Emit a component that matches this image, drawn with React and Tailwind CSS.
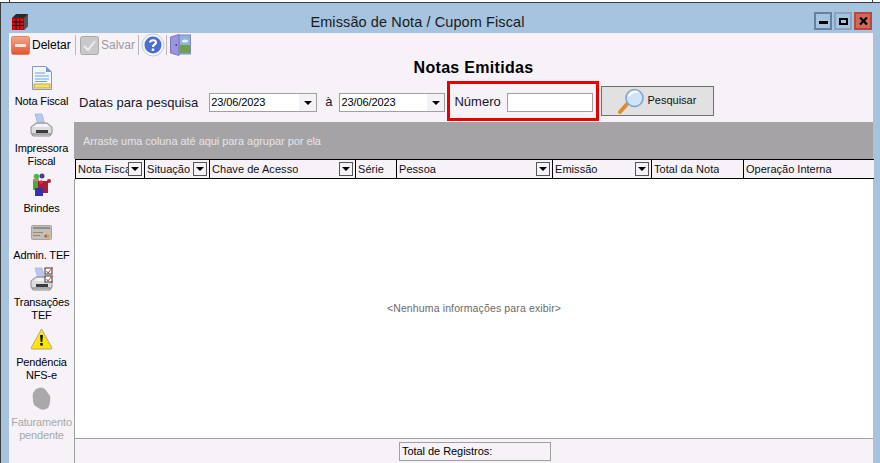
const FONT = "font-['Liberation_Sans',Arial,sans-serif]";

function AppIcon() {
  return (
    <svg width="18" height="18" viewBox="0 0 18 18" className="block">
      <path d="M1 5 L5 1 H17 V13 L13 17 H1 Z" fill="#2a2a2a" />
      <path d="M13 5 L17 1 V13 L13 17 Z" fill="#555" />
      <rect x="1.5" y="5.5" width="11" height="11" fill="#e0101a" stroke="#c00" />
      <path d="M1.5 9 H12.5 M1.5 12.5 H12.5 M5 5.5 V16.5 M8.7 5.5 V16.5" stroke="#111" strokeWidth="1" />
    </svg>
  );
}

function DeleteIcon() {
  return (
    <svg width="19" height="19" viewBox="0 0 19 19" className="block">
      <defs>
        <linearGradient id="dl" x1="0" y1="0" x2="0" y2="1">
          <stop offset="0" stopColor="#f6a58c" />
          <stop offset="1" stopColor="#e2552e" />
        </linearGradient>
      </defs>
      <rect x="0.5" y="0.5" width="18" height="18" rx="2" fill="url(#dl)" stroke="#d9805f" />
      <rect x="4" y="8" width="11" height="3" fill="#fde8e0" />
    </svg>
  );
}

function SaveIcon() {
  return (
    <svg width="19" height="19" viewBox="0 0 19 19" className="block">
      <rect x="0.5" y="0.5" width="18" height="18" rx="2" fill="#c9c9c9" stroke="#a9a9a9" />
      <path d="M4 10 L8 14 L15 5" fill="none" stroke="#eee" strokeWidth="2" />
    </svg>
  );
}

function HelpIcon() {
  return (
    <svg width="24" height="24" viewBox="0 0 24 24" className="block">
      <circle cx="12" cy="12" r="11" fill="#f4f4fa" stroke="#c4cbe0" />
      <circle cx="12" cy="12" r="8.5" fill="#4a6fd0" />
      <path d="M9 9.5 C9 6.5 15 6.5 15 9.5 C15 11.5 12 11.5 12 14" fill="none" stroke="#fff" strokeWidth="2.2" />
      <rect x="10.8" y="15.5" width="2.4" height="2.4" fill="#fff" />
    </svg>
  );
}

function DoorIcon() {
  return (
    <svg width="21" height="22" viewBox="0 0 21 22" className="block">
      <rect x="9" y="1" width="11.5" height="19" fill="#8fb6d8" stroke="#7c8cc0" />
      <rect x="10" y="11" width="10" height="8" fill="#6f9f4f" />
      <ellipse cx="15" cy="7" rx="3" ry="1.5" fill="#e8f0f8" />
      <path d="M0.5 3 L9 0.5 V21.5 L0.5 19 Z" fill="#9c94dc" stroke="#7c74c0" />
      <rect x="5.5" y="10" width="1.5" height="2" fill="#4a4090" />
    </svg>
  );
}

function DocIcon() {
  return (
    <svg width="20" height="24" viewBox="0 0 20 24" className="block">
      <path d="M0.5 0.5 H14 L19.5 6 V23.5 H0.5 Z" fill="#f2f7fd" stroke="#8d97b8" />
      <path d="M14 0.5 V6 H19.5 Z" fill="#6d9bd8" />
      <path d="M3 7 H13 M3 10 H17 M3 13 H17 M3 15.5 H15" stroke="#68a5e2" strokeWidth="1" />
      <rect x="2" y="18" width="16" height="4" fill="#f4e26a" stroke="#c8a838" />
    </svg>
  );
}

function PrinterIcon({ checks }) {
  return (
    <svg width="24" height="24" viewBox="0 0 24 24" className="block">
      <path d="M5 1 H12 L15 12 H8 Z" fill="#b9c8ef" stroke="#9aa8d0" strokeWidth="0.6" />
      <path d="M1 14 L6 10 H17 L22 14 V20 L20 23 H3 L1 20 Z" fill="#dcdcdc" stroke="#8c8c8c" />
      <path d="M4 14 H19 L17 11 H7 Z" fill="#f3f3f3" />
      <rect x="6" y="17" width="12" height="3" fill="#3c3c3c" />
      <path d="M2 21 H21" stroke="#777" />
      {checks && (
        <>
          <rect x="15" y="1" width="7" height="6" fill="#fff" stroke="#333" />
          <path d="M16.5 4 L18 6 L22.5 0.5" fill="none" stroke="#d83a20" />
          <rect x="15" y="9" width="7" height="6" fill="#fff" stroke="#333" />
          <path d="M16.5 12 L18 14 L22.5 8.5" fill="none" stroke="#d83a20" />
        </>
      )}
    </svg>
  );
}

function GiftIcon() {
  return (
    <svg width="20" height="24" viewBox="0 0 20 24" className="block">
      <rect x="1" y="6" width="6" height="6" fill="#d87a7a" />
      <circle cx="4.5" cy="3.5" r="2.8" fill="#48b848" />
      <circle cx="10" cy="3" r="2.5" fill="#4040a0" />
      <rect x="4" y="8" width="12" height="12" fill="#a81c3c" />
      <rect x="1" y="8" width="5" height="9" fill="#40b040" />
      <rect x="3" y="15" width="8" height="8" fill="#3a30a8" />
      <circle cx="17" cy="8" r="2" fill="#b82030" />
      <circle cx="9" cy="9" r="1.8" fill="#e83040" />
    </svg>
  );
}

function CardIcon() {
  return (
    <svg width="21" height="15" viewBox="0 0 21 15" className="block">
      <rect x="0.5" y="0.5" width="20" height="14" rx="1" fill="#c4beb4" stroke="#a8a49c" />
      <rect x="2" y="2" width="17" height="2" fill="#8a8c98" />
      <rect x="2" y="7" width="10" height="1" fill="#8e8a84" />
      <rect x="2" y="10" width="7" height="1" fill="#8e8a84" />
      <circle cx="15" cy="11" r="1.6" fill="#c05030" />
      <circle cx="17" cy="11" r="1.6" fill="#d8a030" />
    </svg>
  );
}

function WarnIcon() {
  return (
    <svg width="23" height="22" viewBox="0 0 23 22" className="block">
      <path d="M11.5 1 L22 20 Q22 21 21 21 H2 Q1 21 1 20 Z" fill="#ffe600" stroke="#b8a878" />
      <path d="M10 7 H13 L12.3 14 H10.7 Z" fill="#111" />
      <rect x="10.2" y="15" width="2.6" height="2.6" fill="#111" />
    </svg>
  );
}

function BagIcon() {
  return (
    <svg width="19" height="24" viewBox="0 0 19 24" className="block">
      <path d="M4 2 Q9 -1 13 2 L18 9 Q19 16 16 21 Q12 24 8 22 L2 18 Q0 11 1 6 Z" fill="#aaa8aa" />
    </svg>
  );
}

function MagnifierIcon() {
  return (
    <svg width="27" height="27" viewBox="0 0 27 27" className="block">
      <path d="M2 24 L10 15" stroke="#e08a30" strokeWidth="4" strokeLinecap="round" />
      <circle cx="16.5" cy="10" r="8.5" fill="#cfe4f6" stroke="#7ea8d0" strokeWidth="1.6" />
      <path d="M11 8 Q14 3 20 4" fill="none" stroke="#fff" strokeWidth="2" />
    </svg>
  );
}

function CloseGlyph() {
  return (
    <svg width="9" height="8" viewBox="0 0 9 8" className="block">
      <path d="M1 0.5 L8 7.5 M8 0.5 L1 7.5" stroke="#000" strokeWidth="2.2" fill="none" />
    </svg>
  );
}

function Arrow() {
  return <span className="block w-0 h-0 border-x-[4px] border-x-transparent border-t-[4px] border-t-black" />;
}

function DateBox({ w }) {
  return (
    <div className={`flex items-center justify-between h-[19px] border border-[#a0a0a0] bg-white pl-[1px] ${w}`}>
      <span className="text-[11px] leading-none tracking-[-0.1px] text-black">23/06/2023</span>
      <span className="flex items-center justify-center w-[17px] h-[17px] bg-[#f4f2f6]"><Arrow /></span>
    </div>
  );
}

function Col({ w, label, filter }) {
  return (
    <div className={`flex items-center justify-between h-full border-r border-black pl-[2px] pr-[2px] overflow-hidden ${w}`}>
      <span className="pt-[1px] text-[11px] leading-none whitespace-nowrap tracking-[0.05px] text-[#111] overflow-hidden">{label}</span>
      {filter && (
        <span className="flex items-center justify-center shrink-0 w-[14px] h-[14px] border border-[#555] bg-[#f4f2f6]"><Arrow /></span>
      )}
    </div>
  );
}

function SideItem({ icon, lines, disabled }) {
  return (
    <div className={`flex flex-col items-center w-full ${disabled ? "text-[#a8a8a8]" : "text-black"}`}>
      <div className="flex items-center justify-center h-[24px]">{icon}</div>
      <div className="mt-[5px] text-center text-[11px] leading-[13px] tracking-[-0.15px] whitespace-nowrap">
        {lines.map((l) => (
          <div key={l}>{l}</div>
        ))}
      </div>
    </div>
  );
}

function WinBtn({ cls, children }) {
  return <span className={`flex items-center justify-center w-[18px] h-[18px] border-2 ${cls}`}>{children}</span>;
}

export default function App() {
  return (
    <div className={`w-[880px] h-[463px] overflow-hidden bg-white flex flex-col ${FONT}`}>
      <div className="h-[3px] shrink-0 bg-white border-b border-[#3c3c3c] flex justify-between pl-[9px] pr-[7px]">
        <span className="w-px h-[2px] bg-[#3c3c3c]" />
        <span className="w-px h-[2px] bg-[#3c3c3c]" />
      </div>
      <div className="flex-1 min-h-0 flex border-l border-[#3c3c3c]">
        <div className="flex-1 min-w-0 flex flex-col bg-[#a6c4df]">
          {/* title bar */}
          <div className="h-[30px] shrink-0 relative flex items-center justify-center pr-[46px]">
            <span className="absolute left-[10px] top-[10px]"><AppIcon /></span>
            <span className="text-[14.5px] tracking-[0.1px] text-[#1a1a1a] mt-[9px]">Emissão de Nota / Cupom Fiscal</span>
            <div className="absolute right-[8px] top-[9px] flex gap-[2px]">
              <WinBtn cls="border-[#66809f]"><span className="block w-[9px] h-[3px] bg-black mt-[3px]" /></WinBtn>
              <WinBtn cls="border-[#8aa3bf]"><span className="block w-[9px] h-[7px] border-2 border-black" /></WinBtn>
              <WinBtn cls="border-[#b8483a] bg-[#d2685a]"><CloseGlyph /></WinBtn>
            </div>
          </div>
          {/* body */}
          <div className="flex-1 min-h-0 ml-[8px] mr-[7px] bg-[#f6f2f7] flex flex-col">
            {/* toolbar */}
            <div className="h-[22px] mt-[1px] shrink-0 flex items-center pl-[2px]">
              <DeleteIcon />
              <span className="ml-[2px] w-[38px] text-[12px] text-black whitespace-nowrap">Deletar</span>
              <span className="ml-[5px] w-px h-[20px] bg-[#b8b8b8]" />
              <span className="ml-[4px]"><SaveIcon /></span>
              <span className="ml-[2px] w-[31px] text-[12px] text-[#9c9c9c] whitespace-nowrap">Salvar</span>
              <span className="ml-[6px] w-px h-[20px] bg-[#b8b8b8]" />
              <span className="ml-[2px]"><HelpIcon /></span>
              <span className="ml-[1px] w-px h-[20px] bg-[#b8b8b8]" />
              <span className="ml-[3px]"><DoorIcon /></span>
            </div>
            <div className="flex-1 min-h-0 flex">
              {/* sidebar */}
              <div className="w-[65px] shrink-0 flex flex-col items-center pt-[10px] gap-[5px]">
                <SideItem icon={<DocIcon />} lines={["Nota Fiscal"]} />
                <SideItem icon={<PrinterIcon />} lines={["Impressora", "Fiscal"]} />
                <SideItem icon={<GiftIcon />} lines={["Brindes"]} />
                <SideItem icon={<CardIcon />} lines={["Admin. TEF"]} />
                <SideItem icon={<PrinterIcon checks />} lines={["Transações", "TEF"]} />
                <SideItem icon={<WarnIcon />} lines={["Pendência", "NFS-e"]} />
                <SideItem icon={<BagIcon />} lines={["Faturamento", "pendente"]} disabled />
              </div>
              {/* main */}
              <div className="flex-1 min-w-0 flex flex-col">
                <div className="h-[66px] shrink-0 flex flex-col">
                  <div className="h-[21px] shrink-0 flex justify-center items-end">
                    <span className="text-[16px] leading-[18px] font-bold tracking-[0.3px] text-black">Notas Emitidas</span>
                  </div>
                  <div className="flex-1 flex items-start">
                    <span className="ml-[5px] mt-[18px] text-[13px] leading-[15px] text-[#151530] whitespace-nowrap">Datas para pesquisa</span>
                    <div className="ml-[11px] mt-[16px]"><DateBox w="w-[108px]" /></div>
                    <span className="ml-[8px] mr-[1px] mt-[17px] text-[13px] leading-[15px] text-[#151530]">à</span>
                    <div className="ml-[6px] mt-[16px]"><DateBox w="w-[106px]" /></div>
                    <div className="ml-[2px] mt-[4px] w-[152px] h-[40px] border-[3px] border-[#e60000] flex items-center pl-[4px]">
                      <span className="mt-[1px] w-[45px] text-[13px] text-[#151530]">Número</span>
                      <span className="ml-[8px] mt-[2px] w-[86px] h-[19px] border border-[#a0a0a0] bg-white" />
                    </div>
                    <div className="ml-[2px] mt-[9px] w-[113px] h-[30px] border border-[#707070] bg-[#e1e1e1] flex items-center pl-[16px]">
                      <MagnifierIcon />
                      <span className="ml-[2px] mb-[2px] text-[11px] text-[#111]">Pesquisar</span>
                    </div>
                  </div>
                </div>
                {/* grid */}
                <div className="flex-1 min-h-0 flex flex-col">
                  <div className="h-[37px] shrink-0 bg-[#a5a3a6] flex items-center pl-[9px]">
                    <span className="text-[11px] tracking-[-0.05px] text-[#e6e4e8] mt-[1px]">Arraste uma coluna até aqui para agrupar por ela</span>
                  </div>
                  <div className="h-[20px] shrink-0 flex items-center border-y border-black border-l bg-[#f6f2f7] ml-[1px] -mr-[1px]">
                    <Col w="w-[69px]" label="Nota Fiscal" filter />
                    <Col w="w-[65px]" label="Situação" filter />
                    <Col w="w-[146px]" label="Chave de Acesso" filter />
                    <Col w="w-[41px]" label="Série" />
                    <Col w="w-[156px]" label="Pessoa" filter />
                    <Col w="w-[99px]" label="Emissão" filter />
                    <Col w="w-[92px]" label="Total da Nota" />
                    <div className="flex-1 pl-[2px] pt-[1px] text-[11px] leading-none text-[#111] whitespace-nowrap">Operação Interna</div>
                  </div>
                  <div className="flex-1 min-h-0 bg-white border-l border-[#a0a0a0] flex items-center justify-center">
                    <span className="text-[10.5px] tracking-[0.13px] text-[#6a6a6a] mt-[1px]">&lt;Nenhuma informações para exibir&gt;</span>
                  </div>
                  <div className="h-[25px] shrink-0 border-t border-l border-[#a0a0a0] flex">
                    <div className="ml-[324px] mt-[3px] w-[152px] h-[19px] border border-[#a0a0a0] flex items-center pl-[2px]">
                      <span className="text-[11px] tracking-[-0.05px] text-black">Total de Registros:</span>
                    </div>
                  </div>
                </div>
              </div>
            </div>
          </div>
        </div>
      </div>
    </div>
  );
}
